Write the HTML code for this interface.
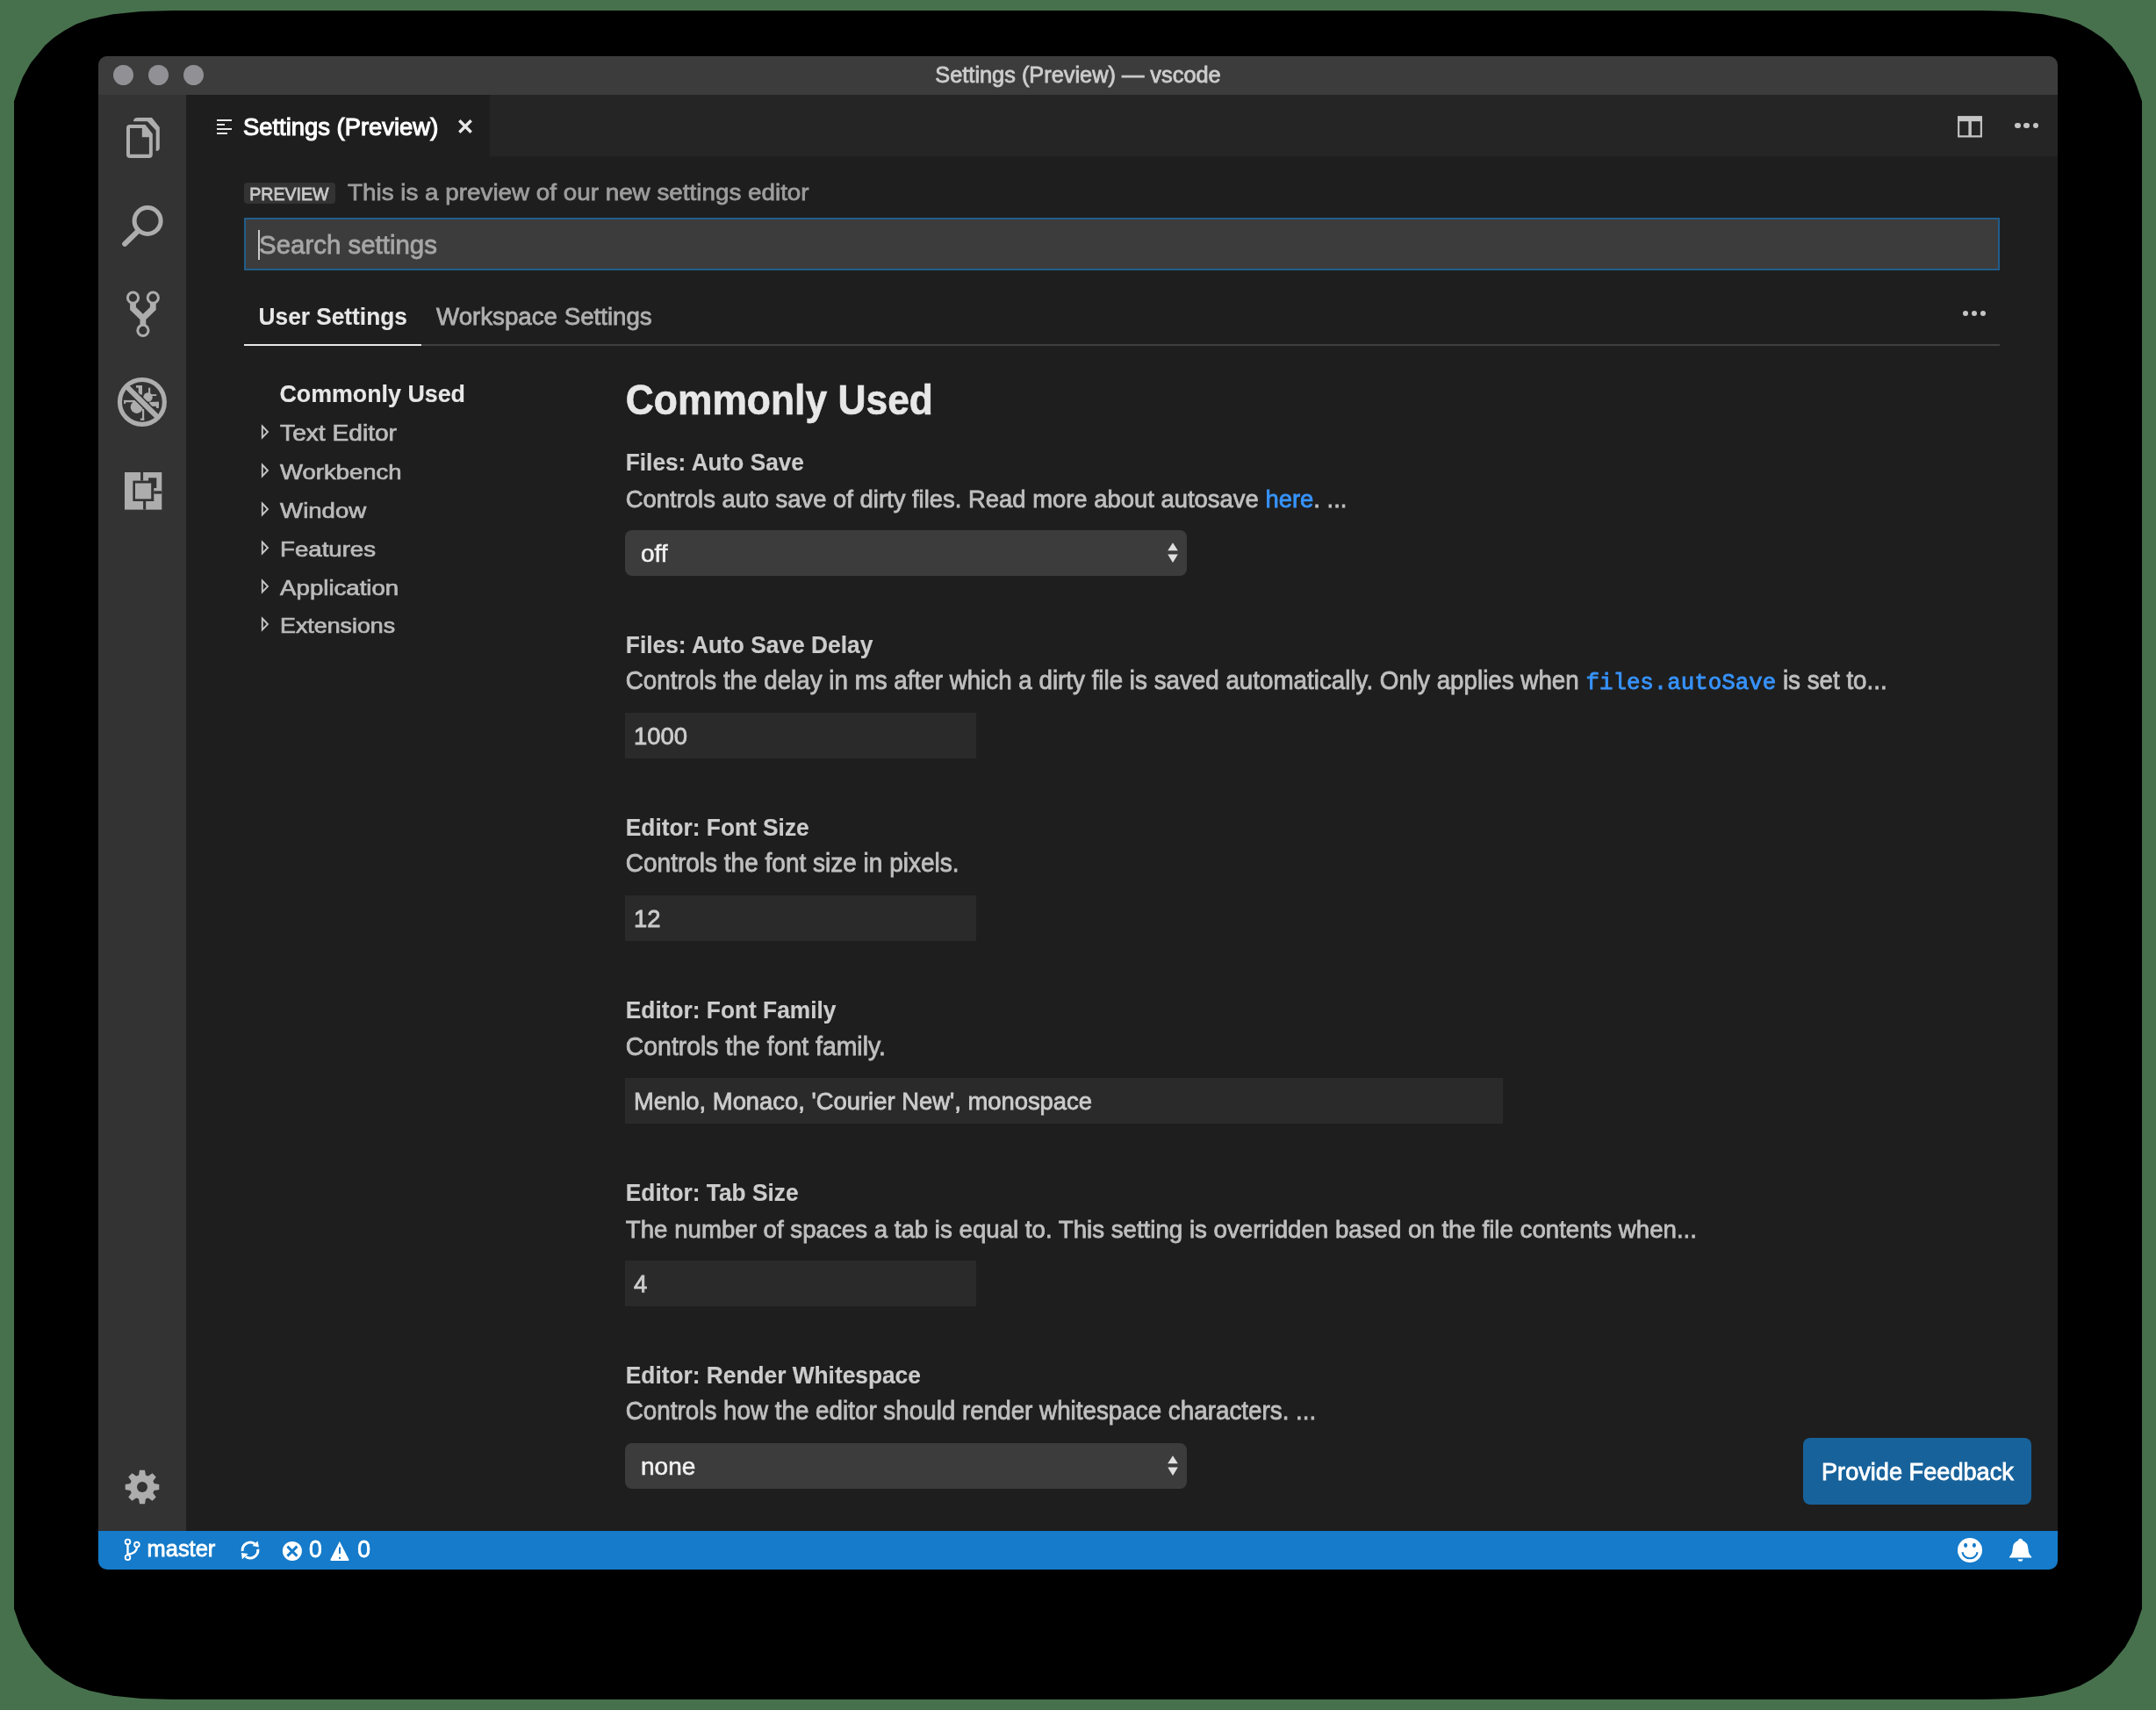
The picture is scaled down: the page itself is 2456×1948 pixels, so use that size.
<!DOCTYPE html>
<html><head><meta charset="utf-8">
<style>
html,body{margin:0;padding:0;}
body{width:2456px;height:1948px;position:relative;overflow:hidden;background:#47714d;font-family:"Liberation Sans",sans-serif;}
.a{position:absolute;}
.t{position:absolute;white-space:pre;line-height:1;-webkit-text-stroke:0.8px currentColor;}
#root{position:absolute;left:0;top:0;width:2456px;height:1948px;will-change:transform;}
svg{position:absolute;overflow:visible;}
</style></head><body>

<div id="root">
<svg style="left:16px;top:12px" width="2424" height="1924"><path d="M0,103.3 L5.9,86 L10,75.8 L14.1,68.6 L19.2,59.4 L26.9,50.2 L35,40 L45.2,30.9 L57.5,22.7 L70.7,15.6 L86,10 L112.6,4.3 L145,1 L182,0 L2242,0 L2279,1 L2311.4,4.3 L2338,10 L2353.3,15.6 L2366.5,22.7 L2378.8,30.9 L2389,40 L2397.1,50.2 L2404.8,59.4 L2409.9,68.6 L2414,75.8 L2418.1,86 L2424,103.3 L2424,1820.7 L2418.1,1838 L2414,1848.2 L2409.9,1855.4 L2404.8,1864.6 L2397.1,1873.8 L2389,1884 L2378.8,1893.1 L2366.5,1901.3 L2353.3,1908.4 L2338,1914 L2311.4,1919.7 L2279,1923 L2242,1924 L182,1924 L145,1923 L112.6,1919.7 L86,1914 L70.7,1908.4 L57.5,1901.3 L45.2,1893.1 L35,1884 L26.9,1873.8 L19.2,1864.6 L14.1,1855.4 L10,1848.2 L5.9,1838 L0,1820.7 Z" fill="#000"/></svg>
<div class="a" style="left:112px;top:64px;width:2232px;height:1724px;background:#1e1e1e;border-radius:10px;"></div>
<div class="a" style="left:112px;top:64px;width:2232px;height:44px;background:#3c3c3c;border-radius:10px 10px 0 0;"></div>
<div class="a" style="left:128.5px;top:74.4px;width:23px;height:23px;border-radius:50%;background:#909095;"></div>
<div class="a" style="left:168.5px;top:74.4px;width:23px;height:23px;border-radius:50%;background:#909095;"></div>
<div class="a" style="left:208.5px;top:74.4px;width:23px;height:23px;border-radius:50%;background:#909095;"></div>
<div class="t" style="left:112px;width:2232px;text-align:center;top:72.94px;font-size:25.35px;color:#cccccc">Settings (Preview) — vscode</div>
<div class="a" style="left:112px;top:108px;width:100px;height:1636px;background:#333333;"></div>
<div class="a" style="left:212px;top:108px;width:2132px;height:70px;background:#252526;"></div>
<div class="a" style="left:212px;top:108px;width:346px;height:70px;background:#1e1e1e;"></div>
<div class="a" style="left:112px;top:1744px;width:2232px;height:44px;background:#157bca;border-radius:0 0 10px 10px;"></div>
<div class="a" style="left:247.1px;top:136px;width:16.5px;height:2px;background:#e8e8e8;"></div>
<div class="a" style="left:247.1px;top:141px;width:9.2px;height:2px;background:#e8e8e8;"></div>
<div class="a" style="left:247.1px;top:146px;width:16.5px;height:2px;background:#e8e8e8;"></div>
<div class="a" style="left:247.1px;top:151px;width:12.1px;height:2px;background:#e8e8e8;"></div>
<div class="t" style="left:276.90px;top:131.38px;font-size:27.42px;color:#ffffff;transform:scaleY(1.03);transform-origin:0 23.22px;-webkit-text-stroke:1.1px currentColor;">Settings (Preview)</div>
<svg style="left:522px;top:136px" width="16" height="16" viewBox="0 0 16 16"><path d="M1.3,1.3 L14.7,14.7 M14.7,1.3 L1.3,14.7" stroke="#e8e8e8" stroke-width="3.4" stroke-linecap="butt"/></svg>
<svg style="left:2230px;top:132px" width="29" height="25" viewBox="0 0 30 25"><path d="M1.2,1 H27.8 V23.8 H1.2 Z" fill="none" stroke="#c5c5c5" stroke-width="2.2"/><rect x="0" y="0" width="29" height="6" fill="#c5c5c5"/><rect x="12.8" y="5" width="3.6" height="19" fill="#c5c5c5"/></svg>
<div class="a" style="left:2295.45px;top:139.65px;width:6.5px;height:6.5px;border-radius:50%;background:#c5c5c5"></div>
<div class="a" style="left:2305.45px;top:139.65px;width:6.5px;height:6.5px;border-radius:50%;background:#c5c5c5"></div>
<div class="a" style="left:2315.65px;top:139.65px;width:6.5px;height:6.5px;border-radius:50%;background:#c5c5c5"></div>
<div class="a" style="left:278px;top:208px;width:103.7px;height:23.6px;background:#333333;border-radius:4px;"></div>
<div class="t" style="left:284.30px;top:212.44px;font-size:19.56px;color:#c8c8c8;transform:scaleY(1.07);transform-origin:0 16.56px;">PREVIEW</div>
<div class="t" style="left:396.00px;top:205.44px;font-size:27.82px;color:#9d9d9d;transform:scaleY(0.95);transform-origin:0 23.56px;">This is a preview of our new settings editor</div>
<div class="a" style="left:278px;top:248px;width:2000px;height:60px;background:#3c3c3c;box-sizing:border-box;border:2px solid #215d8b;"></div>
<div class="t" style="left:295.00px;top:264.06px;font-size:29.45px;color:#a6a6a6;transform:scaleY(1.03);transform-origin:0 24.94px;">Search settings</div>
<div class="a" style="left:294px;top:262px;width:2px;height:34px;background:#c8c8c8;"></div>
<div class="t" style="left:294.60px;top:347.77px;font-size:26.25px;color:#e7e7e7;font-weight:700;transform:scaleY(1.08);transform-origin:0 22.23px;-webkit-text-stroke:0.1px currentColor;">User Settings</div>
<div class="t" style="left:497.00px;top:346.55px;font-size:27.7px;color:#b0b0b0;transform:scaleY(1.03);transform-origin:0 23.45px;">Workspace Settings</div>
<div class="a" style="left:480px;top:392px;width:1798px;height:2px;background:#404040;"></div>
<div class="a" style="left:278px;top:391.8px;width:202px;height:2.6px;background:#e7e7e7;"></div>
<div class="a" style="left:2235.85px;top:353.95000000000005px;width:6.3px;height:6.3px;border-radius:50%;background:#c5c5c5"></div>
<div class="a" style="left:2245.85px;top:353.95000000000005px;width:6.3px;height:6.3px;border-radius:50%;background:#c5c5c5"></div>
<div class="a" style="left:2255.85px;top:353.95000000000005px;width:6.3px;height:6.3px;border-radius:50%;background:#c5c5c5"></div>
<div class="t" style="left:318.40px;top:435.59px;font-size:26.82px;color:#e7e7e7;font-weight:700;transform:scaleY(1.06);transform-origin:0 22.71px;-webkit-text-stroke:0.15px currentColor;">Commonly Used</div>
<div class="t" style="left:319.10px;top:478.75px;font-size:28.13px;color:#bbbbbb;transform:scaleY(0.89);transform-origin:0 23.82px;">Text Editor</div>
<svg style="left:297px;top:484.07px" width="10" height="16" viewBox="0 0 10 16"><path d="M1.8,1.5 L8,8 L1.8,14.5 Z" fill="none" stroke="#c5c5c5" stroke-width="1.9" stroke-linejoin="miter"/></svg>
<div class="t" style="left:319.10px;top:523.17px;font-size:27.48px;color:#bbbbbb;transform:scaleY(0.89);transform-origin:0 23.27px;">Workbench</div>
<svg style="left:297px;top:527.94px" width="10" height="16" viewBox="0 0 10 16"><path d="M1.8,1.5 L8,8 L1.8,14.5 Z" fill="none" stroke="#c5c5c5" stroke-width="1.9" stroke-linejoin="miter"/></svg>
<div class="t" style="left:319.10px;top:566.94px;font-size:27.6px;color:#bbbbbb;transform:scaleY(0.89);transform-origin:0 23.37px;">Window</div>
<svg style="left:297px;top:571.81px" width="10" height="16" viewBox="0 0 10 16"><path d="M1.8,1.5 L8,8 L1.8,14.5 Z" fill="none" stroke="#c5c5c5" stroke-width="1.9" stroke-linejoin="miter"/></svg>
<div class="t" style="left:319.10px;top:610.81px;font-size:27.6px;color:#bbbbbb;transform:scaleY(0.89);transform-origin:0 23.37px;">Features</div>
<svg style="left:297px;top:615.68px" width="10" height="16" viewBox="0 0 10 16"><path d="M1.8,1.5 L8,8 L1.8,14.5 Z" fill="none" stroke="#c5c5c5" stroke-width="1.9" stroke-linejoin="miter"/></svg>
<div class="t" style="left:319.10px;top:654.65px;font-size:27.64px;color:#bbbbbb;transform:scaleY(0.89);transform-origin:0 23.40px;">Application</div>
<svg style="left:297px;top:659.55px" width="10" height="16" viewBox="0 0 10 16"><path d="M1.8,1.5 L8,8 L1.8,14.5 Z" fill="none" stroke="#c5c5c5" stroke-width="1.9" stroke-linejoin="miter"/></svg>
<div class="t" style="left:319.10px;top:699.23px;font-size:26.8px;color:#bbbbbb;transform:scaleY(0.89);transform-origin:0 22.69px;">Extensions</div>
<svg style="left:297px;top:703.42px" width="10" height="16" viewBox="0 0 10 16"><path d="M1.8,1.5 L8,8 L1.8,14.5 Z" fill="none" stroke="#c5c5c5" stroke-width="1.9" stroke-linejoin="miter"/></svg>
<div class="t" style="left:712.80px;top:435.32px;font-size:44.38px;color:#e7e7e7;font-weight:700;transform:scaleY(1.087);transform-origin:0 37.58px;-webkit-text-stroke:0.6px currentColor;">Commonly Used</div>
<div class="t" style="left:712.80px;top:513.78px;font-size:26.24px;color:#cccccc;font-weight:700;transform:scaleY(1.06);transform-origin:0 22.22px;-webkit-text-stroke:0.15px currentColor;">Files: Auto Save</div>
<div class="t" style="left:712.80px;top:554.78px;font-size:27.43px;color:#bfbfbf;transform:scaleY(1.03);transform-origin:0 23.22px;">Controls auto save of dirty files. Read more about autosave <span style="color:#3794ff">here</span>. ...</div>
<div class="a" style="left:712px;top:604px;width:640px;height:51.5px;background:#3c3c3c;border-radius:8px;"></div>
<div class="t" style="left:730.00px;top:616.79px;font-size:28px;color:#f0f0f0;-webkit-text-stroke:0.6px currentColor;">off</div>
<svg style="left:1330px;top:618.00px" width="12" height="24" viewBox="0 0 12 24"><path d="M6,0.3 L11.8,9.3 L0.2,9.3 Z M0.2,13.6 L11.8,13.6 L6,22.9 Z" fill="#e0e0e0"/></svg>
<div class="t" style="left:712.80px;top:721.69px;font-size:26.35px;color:#cccccc;font-weight:700;transform:scaleY(1.06);transform-origin:0 22.31px;-webkit-text-stroke:0.15px currentColor;">Files: Auto Save Delay</div>
<div class="t" style="left:712.80px;top:762.49px;font-size:27.77px;color:#bfbfbf;transform:scaleY(1.03);transform-origin:0 23.51px;">Controls the delay in ms after which a dirty file is saved automatically. Only applies when <span style="font-family:'Liberation Mono',monospace;color:#3794ff;font-size:25.8px">files.autoSave</span> is set to...</div>
<div class="a" style="left:712px;top:812px;width:400px;height:52px;background:#2a2a2a;"></div>
<div class="t" style="left:722.00px;top:824.80px;font-size:27.4px;color:#cccccc;transform:scaleY(1.03);transform-origin:0 23.20px;">1000</div>
<div class="t" style="left:712.80px;top:929.73px;font-size:26.3px;color:#cccccc;font-weight:700;transform:scaleY(1.06);transform-origin:0 22.27px;-webkit-text-stroke:0.15px currentColor;">Editor: Font Size</div>
<div class="t" style="left:712.80px;top:970.29px;font-size:28.0px;color:#bfbfbf;transform:scaleY(1.03);transform-origin:0 23.71px;">Controls the font size in pixels.</div>
<div class="a" style="left:712px;top:1020px;width:400px;height:52px;background:#2a2a2a;"></div>
<div class="t" style="left:722.00px;top:1032.80px;font-size:27.4px;color:#cccccc;transform:scaleY(1.03);transform-origin:0 23.20px;">12</div>
<div class="t" style="left:712.80px;top:1137.73px;font-size:26.3px;color:#cccccc;font-weight:700;transform:scaleY(1.06);transform-origin:0 22.27px;-webkit-text-stroke:0.15px currentColor;">Editor: Font Family</div>
<div class="t" style="left:712.80px;top:1177.95px;font-size:28.4px;color:#bfbfbf;transform:scaleY(1.03);transform-origin:0 24.05px;">Controls the font family.</div>
<div class="a" style="left:712px;top:1228px;width:1000px;height:52px;background:#2a2a2a;"></div>
<div class="t" style="left:722.00px;top:1240.80px;font-size:27.4px;color:#cccccc;transform:scaleY(1.03);transform-origin:0 23.20px;">Menlo, Monaco, 'Courier New', monospace</div>
<div class="t" style="left:712.80px;top:1345.73px;font-size:26.3px;color:#cccccc;font-weight:700;transform:scaleY(1.06);transform-origin:0 22.27px;-webkit-text-stroke:0.15px currentColor;">Editor: Tab Size</div>
<div class="t" style="left:712.80px;top:1386.57px;font-size:27.67px;color:#bfbfbf;transform:scaleY(1.03);transform-origin:0 23.43px;">The number of spaces a tab is equal to. This setting is overridden based on the file contents when...</div>
<div class="a" style="left:712px;top:1436px;width:400px;height:52px;background:#2a2a2a;"></div>
<div class="t" style="left:722.00px;top:1448.80px;font-size:27.4px;color:#cccccc;transform:scaleY(1.03);transform-origin:0 23.20px;">4</div>
<div class="t" style="left:712.80px;top:1553.73px;font-size:26.3px;color:#cccccc;font-weight:700;transform:scaleY(1.06);transform-origin:0 22.27px;-webkit-text-stroke:0.15px currentColor;">Editor: Render Whitespace</div>
<div class="t" style="left:712.80px;top:1594.46px;font-size:27.8px;color:#bfbfbf;transform:scaleY(1.03);transform-origin:0 23.54px;">Controls how the editor should render whitespace characters. ...</div>
<div class="a" style="left:712px;top:1644px;width:640px;height:51.5px;background:#3c3c3c;border-radius:8px;"></div>
<div class="t" style="left:730.00px;top:1656.79px;font-size:28px;color:#f0f0f0;-webkit-text-stroke:0.6px currentColor;">none</div>
<svg style="left:1330px;top:1658.00px" width="12" height="24" viewBox="0 0 12 24"><path d="M6,0.3 L11.8,9.3 L0.2,9.3 Z M0.2,13.6 L11.8,13.6 L6,22.9 Z" fill="#e0e0e0"/></svg>
<div class="a" style="left:2054px;top:1638px;width:260px;height:76px;background:#17629b;border-radius:8px;"></div>
<div class="t" style="left:2075.00px;top:1663.30px;font-size:27.16px;color:#ffffff;transform:scaleY(1.03);transform-origin:0 23.00px;">Provide Feedback</div>
<svg style="left:112px;top:108px" width="100" height="520" viewBox="0 0 100 520"><path d="M39.9,30.2 Q40.2,25.9 45,25.9 L61,25.9 L69.8,37 L69.8,60.5 Q69.8,64.1 65.7,64.1 L65.7,40.4 L55.9,30.2 Z" fill="#adadad"/><path fill-rule="evenodd" d="M36,33.9 L53.5,33.9 L61.8,44.4 L61.8,68 Q61.8,71.9 57.9,71.9 L36,71.9 Q32,71.9 32,68 L32,37.8 Q32,33.9 36,33.9 Z M36,38.1 L49.8,38.1 L49.8,48.2 L57.9,48.2 L57.9,67.8 L36,67.8 Z" fill="#adadad"/><circle cx="56.1" cy="143.5" r="15" fill="none" stroke="#adadad" stroke-width="5"/><path d="M30.2,169.9 L44.5,155.8" stroke="#adadad" stroke-width="6" stroke-linecap="round"/><circle cx="39.5" cy="231.2" r="6.1" fill="none" stroke="#adadad" stroke-width="3"/><circle cx="62.3" cy="231.2" r="6.1" fill="none" stroke="#adadad" stroke-width="3"/><circle cx="50.9" cy="268.4" r="6.1" fill="none" stroke="#adadad" stroke-width="3"/><path d="M39.5,236.5 L39.5,243.5 L50.9,254.5 L62.3,243.5 L62.3,236.5 M50.9,253 L50.9,263" fill="none" stroke="#adadad" stroke-width="6.8" stroke-linejoin="miter"/></svg>
<svg style="left:130px;top:426px" width="64" height="64" viewBox="0 0 64 64"><circle cx="31.9" cy="31.9" r="25.45" fill="none" stroke="#adadad" stroke-width="5.1"/><g fill="#adadad"><circle cx="38.5" cy="26.5" r="5.2"/><circle cx="25.8" cy="37.8" r="7.1"/><rect x="27.7" y="13.1" width="4.3" height="10.5"/><rect x="25" y="13.1" width="7" height="2.6"/><rect x="39.1" y="15.7" width="2.1" height="8"/><rect x="41.2" y="23.2" width="7" height="1.8"/><rect x="40.2" y="31.8" width="10.7" height="5.1"/><rect x="47.9" y="31.8" width="3" height="7.1"/><rect x="11.2" y="29.9" width="12.8" height="2.3"/><rect x="11.2" y="29.9" width="1.9" height="4.1"/><rect x="32" y="40" width="2.2" height="12.8"/><rect x="30" y="50.6" width="4.2" height="2.2"/></g><defs><clipPath id="dbgclip"><circle cx="31.9" cy="31.9" r="22.9"/></clipPath></defs><path d="M14.2,14.3 L49.5,49.3" stroke="#333333" stroke-width="9" clip-path="url(#dbgclip)"/><path d="M13.6,13.7 L50.2,49.9" stroke="#adadad" stroke-width="6"/></svg>
<svg style="left:142px;top:538px" width="43" height="43" viewBox="0 0 43 43"><rect x="0" y="0" width="42.3" height="42.6" fill="#adadad"/><rect x="9.4" y="9.6" width="23.9" height="23.4" fill="#333333"/><rect x="27.1" y="6.3" width="9.2" height="11.7" fill="#333333"/><rect x="12" y="12.5" width="18.2" height="17.9" fill="#adadad"/><rect x="18.1" y="0" width="3" height="9.6" fill="#333333"/><rect x="21.1" y="33" width="3.1" height="9.6" fill="#333333"/><rect x="33.3" y="21.3" width="9" height="3.3" fill="#333333"/></svg>
<svg style="left:142px;top:1674px" width="40" height="40" viewBox="-20 -20 40 40"><g fill="#adadad"><path d="M-4.2,-12 L-3,-19.3 L3,-19.3 L4.2,-12 Z" transform="rotate(0)"/><path d="M-4.2,-12 L-3,-19.3 L3,-19.3 L4.2,-12 Z" transform="rotate(45)"/><path d="M-4.2,-12 L-3,-19.3 L3,-19.3 L4.2,-12 Z" transform="rotate(90)"/><path d="M-4.2,-12 L-3,-19.3 L3,-19.3 L4.2,-12 Z" transform="rotate(135)"/><path d="M-4.2,-12 L-3,-19.3 L3,-19.3 L4.2,-12 Z" transform="rotate(180)"/><path d="M-4.2,-12 L-3,-19.3 L3,-19.3 L4.2,-12 Z" transform="rotate(225)"/><path d="M-4.2,-12 L-3,-19.3 L3,-19.3 L4.2,-12 Z" transform="rotate(270)"/><path d="M-4.2,-12 L-3,-19.3 L3,-19.3 L4.2,-12 Z" transform="rotate(315)"/><circle cx="0" cy="0" r="14"/></g><circle cx="0" cy="0" r="6" fill="#333333"/></svg>
<svg style="left:136px;top:1748px" width="30" height="36" viewBox="0 0 30 36"><circle cx="9.5" cy="8.4" r="2.8" fill="none" stroke="#ffffff" stroke-width="1.9"/><circle cx="19.9" cy="11.6" r="2.8" fill="none" stroke="#ffffff" stroke-width="1.9"/><circle cx="9.5" cy="26.2" r="2.8" fill="none" stroke="#ffffff" stroke-width="1.9"/><path d="M9.5,11.2 L9.5,23.4 M19.9,14.4 Q19.9,20.8 10.5,22.6" fill="none" stroke="#ffffff" stroke-width="2.4"/></svg>
<div class="t" style="left:167.60px;top:1752.38px;font-size:25.42px;color:#ffffff;transform:scaleY(1.03);transform-origin:0 21.52px;">master</div>
<svg style="left:272px;top:1752.5px" width="26" height="26" viewBox="-13 -13 26 26"><path d="M-8.8,1 A8.9,8.9 0 0 1 5.2,-7.2" fill="none" stroke="#ffffff" stroke-width="3"/><path d="M8.8,-1.2 A8.9,8.9 0 0 1 -5.2,7.2" fill="none" stroke="#ffffff" stroke-width="3"/><path d="M8.6,-10.6 L9.9,-3.5 L2.6,-5.1 Z" fill="#ffffff"/><path d="M-9.1,10.2 L-10.1,2.9 L-2.2,3.9 Z" fill="#ffffff"/></svg>
<svg style="left:316px;top:1748px" width="110" height="36" viewBox="0 0 110 36"><circle cx="16.9" cy="18.9" r="11" fill="#ffffff"/><path d="M11.4,13.6 L22.4,24.6 M22.4,13.6 L11.4,24.6" stroke="#157bca" stroke-width="2.9"/><path d="M70.9,8 L81.4,28.5 Q82,30.1 80.3,30.1 L61.6,30.1 Q59.9,30.1 60.5,28.5 Z" fill="#ffffff"/><rect x="70" y="14.5" width="2" height="7.4" fill="#157bca"/><rect x="70" y="25.8" width="2" height="2" fill="#157bca"/></svg>
<div class="t" style="left:352.00px;top:1752.16px;font-size:26.5px;color:#ffffff;transform:scaleY(1.03);transform-origin:0 22.44px;">0</div>
<div class="t" style="left:407.20px;top:1752.16px;font-size:26.5px;color:#ffffff;transform:scaleY(1.03);transform-origin:0 22.44px;">0</div>
<svg style="left:2228px;top:1750px" width="32" height="32" viewBox="-16 -16 32 32"><circle cx="0" cy="0" r="14" fill="#ffffff"/><ellipse cx="-4.9" cy="-5.7" rx="2" ry="2.6" fill="#157bca"/><ellipse cx="4.9" cy="-5.7" rx="2" ry="2.6" fill="#157bca"/><path d="M-8.6,2.3 A8.8,8.8 0 0 0 8.6,2.3" fill="none" stroke="#157bca" stroke-width="2.2"/></svg>
<svg style="left:2288px;top:1752px" width="28" height="28" viewBox="0 0 28 28"><path d="M13.5,0.8 Q15.5,0.8 16.3,3 Q22,5 22.5,13 Q22.8,18.5 26.2,21.5 L26.2,22.5 L1,22.5 L1,21.5 Q4.3,18.5 4.6,13 Q5,5 10.8,3 Q11.5,0.8 13.5,0.8 Z" fill="#ffffff"/><path d="M10.5,24.2 L16.6,24.2 Q16,26.8 13.5,26.8 Q11,26.8 10.5,24.2 Z" fill="#ffffff"/></svg>
</div></body></html>
